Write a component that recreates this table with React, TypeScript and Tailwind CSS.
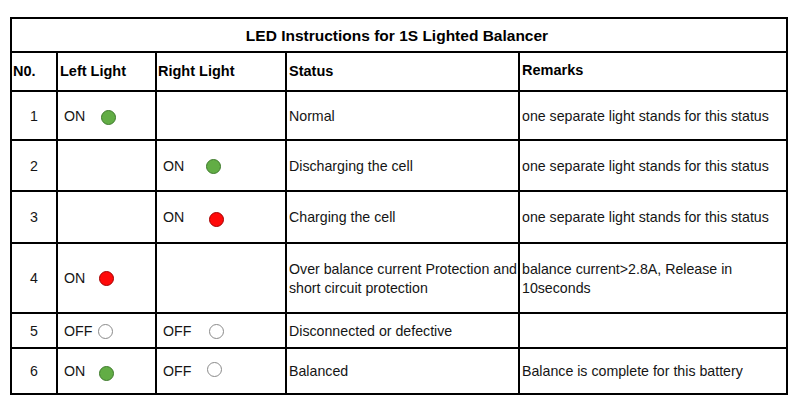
import React from 'react';

type Led = 'green' | 'red' | 'off';

const ledClass: Record<Led, string> = {
  green: 'bg-[#62ad45] border-[#3e7a2c]',
  red: 'bg-[#ff0a0a] border-[#a40000]',
  off: 'bg-white border-[#8a8a8a]',
};

function Light({ label, led, dotClass }: { label: string; led: Led; dotClass: string }) {
  return (
    <div className="flex items-center h-full">
      <span className="w-[36px] shrink-0">{label}</span>
      <span className={`inline-block w-[15px] h-[15px] rounded-full border-[1.5px] ${ledClass[led]} ${dotClass}`} />
    </div>
  );
}

const rows = [
  {
    no: '1',
    left: { label: 'ON', led: 'green' as Led, dot: 'ml-[1px] mt-[2px]' },
    right: null,
    status: ['Normal'],
    remarks: ['one separate light stands for this status'],
  },
  {
    no: '2',
    left: null,
    right: { label: 'ON', led: 'green' as Led, dot: 'ml-[7px]' },
    status: ['Discharging the cell'],
    remarks: ['one separate light stands for this status'],
  },
  {
    no: '3',
    left: null,
    right: { label: 'ON', led: 'red' as Led, dot: 'ml-[10px] mt-[3px]' },
    status: ['Charging the cell'],
    remarks: ['one separate light stands for this status'],
  },
  {
    no: '4',
    left: { label: 'ON', led: 'red' as Led, dot: '-ml-[1px]' },
    right: null,
    status: ['Over balance current Protection and', 'short circuit protection'],
    remarks: ['balance current>2.8A, Release in', '10seconds'],
  },
  {
    no: '5',
    left: { label: 'OFF', led: 'off' as Led, dot: '-ml-[2px]' },
    right: { label: 'OFF', led: 'off' as Led, dot: 'ml-[10px]' },
    status: ['Disconnected or defective'],
    remarks: [],
  },
  {
    no: '6',
    left: { label: 'ON', led: 'green' as Led, dot: '-ml-[1px] mt-[3px]' },
    right: { label: 'OFF', led: 'off' as Led, dot: 'ml-[8px] -mt-[4px]' },
    status: ['Balanced'],
    remarks: ['Balance is complete for this battery'],
  },
];

export default function App() {
  return (
    <div
      className="w-[800px] h-[409px] bg-white pt-[17px] pl-[10px] text-[#151515]"
      style={{ fontFamily: '"Liberation Sans", Arial, sans-serif' }}
    >
      <div className="grid w-fit grid-cols-[44px_97px_128px_231px_266px] grid-rows-[32px_37px_47px_49px_50px_68px_33px_44px] gap-[2px] bg-black p-[2px] text-[14.2px] leading-[19px]">
        <div className="col-span-5 bg-white flex items-center justify-center font-bold text-[15.5px] text-black pr-[4px]">
          LED Instructions for 1S Lighted Balancer
        </div>

        <div className="bg-white flex items-center pl-[1px] font-bold text-[14.5px] text-black">N0.</div>
        <div className="bg-white flex items-center pl-[2px] font-bold text-[14.5px] text-black">Left Light</div>
        <div className="bg-white flex items-center pl-[1px] font-bold text-[14.5px] text-black">Right Light</div>
        <div className="bg-white flex items-center pl-[2px] font-bold text-[14.5px] text-black">Status</div>
        <div className="bg-white flex items-center pl-[2px] pb-[3px] font-bold text-[14.5px] text-black">Remarks</div>

        {rows.map((r) => (
          <React.Fragment key={r.no}>
            <div className="bg-white flex items-center justify-center pt-[1px]">{r.no}</div>
            <div className="bg-white pl-[6px] pt-[1px]">
              {r.left && <Light label={r.left.label} led={r.left.led} dotClass={r.left.dot} />}
            </div>
            <div className="bg-white pl-[6px] pt-[1px]">
              {r.right && <Light label={r.right.label} led={r.right.led} dotClass={r.right.dot} />}
            </div>
            <div className="bg-white flex flex-col justify-center pl-[2px] pt-[1px] whitespace-nowrap">
              {r.status.map((s) => (
                <span key={s}>{s}</span>
              ))}
            </div>
            <div className="bg-white flex flex-col justify-center pl-[2px] pt-[1px] whitespace-nowrap">
              {r.remarks.map((s) => (
                <span key={s}>{s}</span>
              ))}
            </div>
          </React.Fragment>
        ))}
      </div>
    </div>
  );
}
